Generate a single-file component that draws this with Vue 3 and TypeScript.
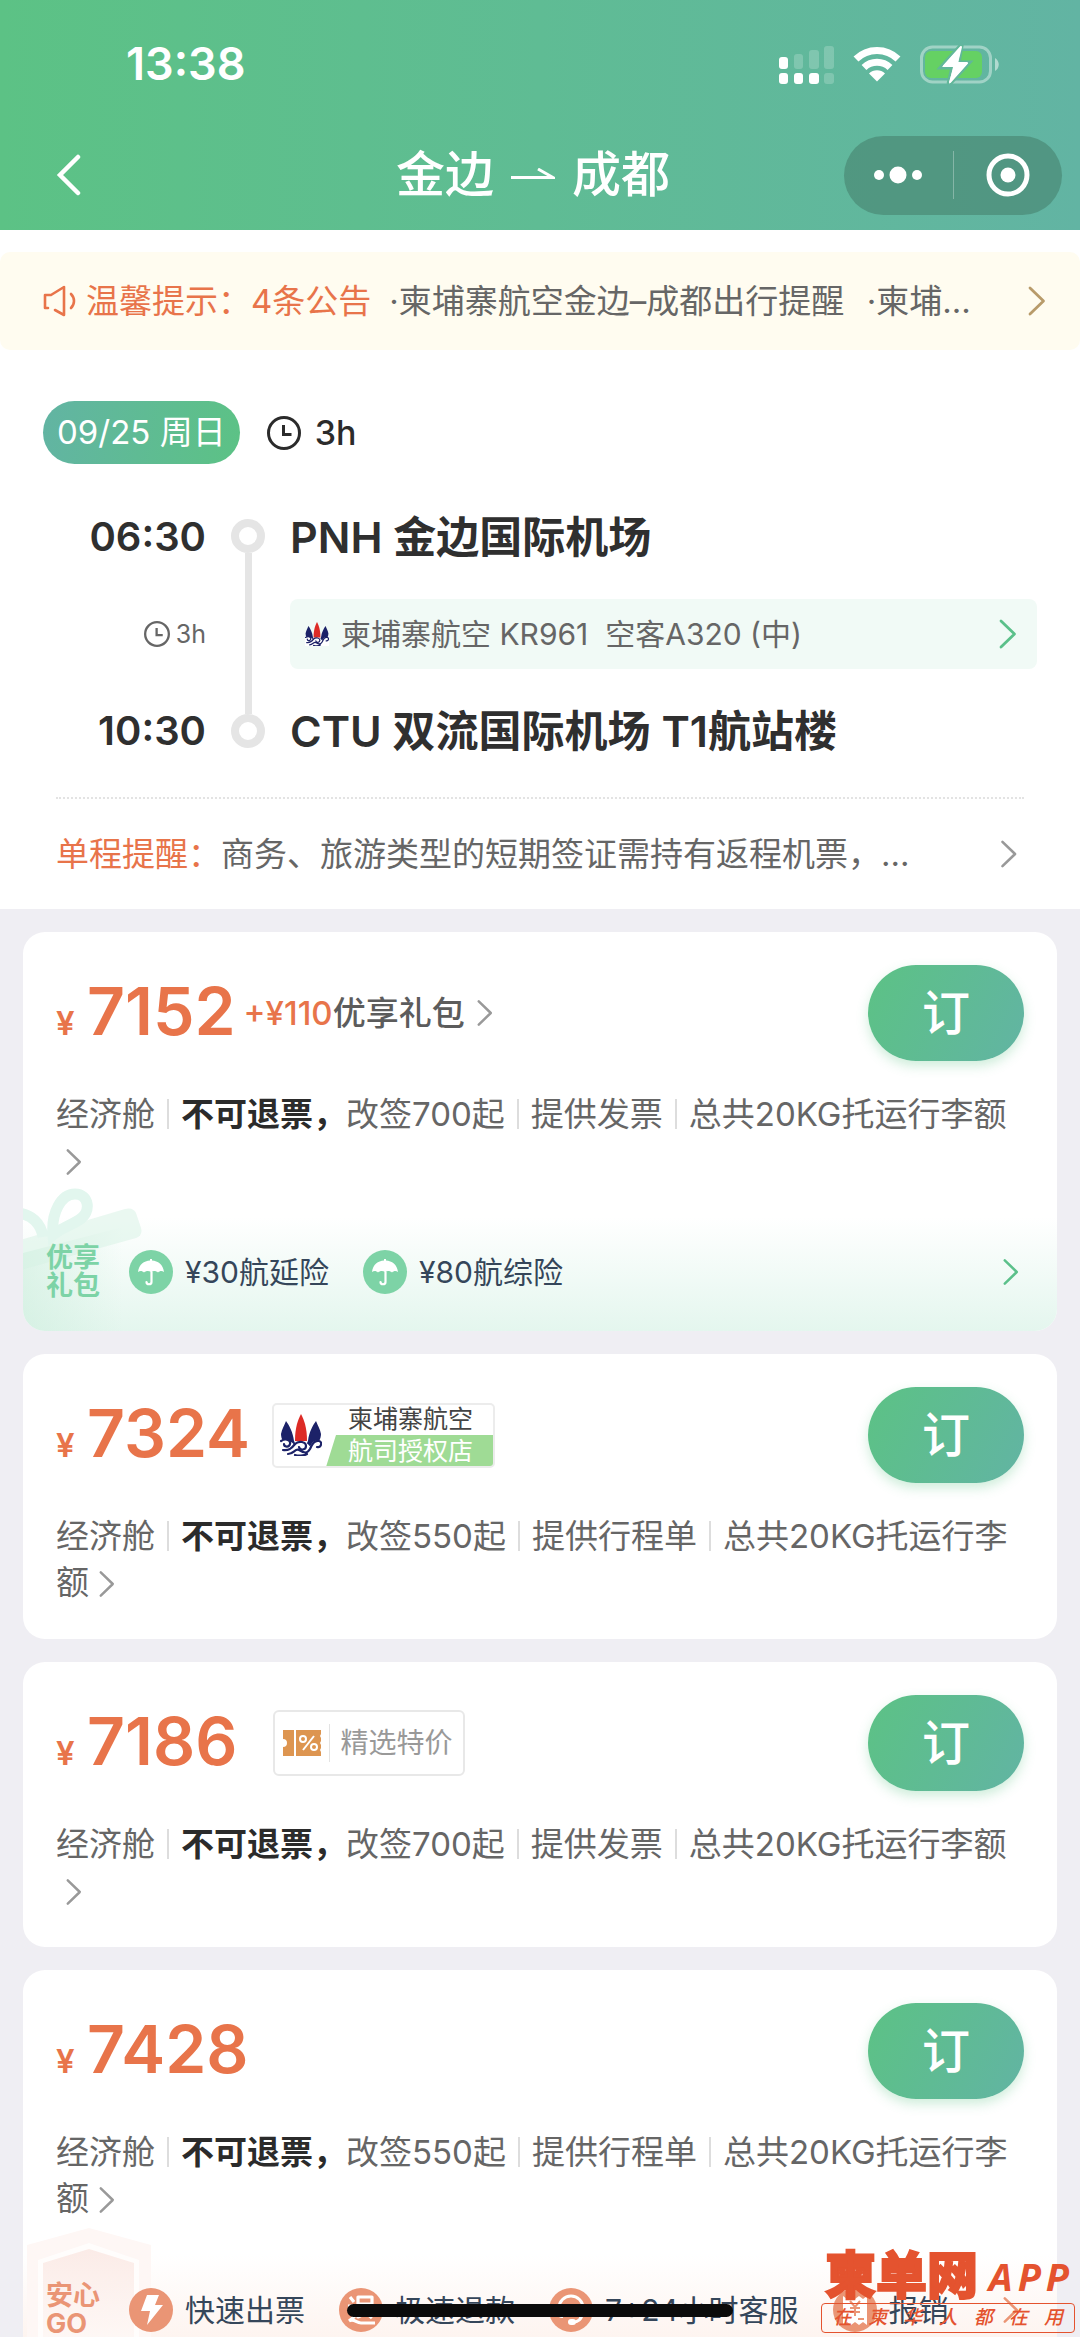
<script setup lang="ts">
interface Fare {
  price: number
  rebook: string
  invoice: string
  tag?: 'gift' | 'airline' | 'special'
  panel?: 'gift' | 'safe'
}

interface Perk {
  icon: string
  label: string
}

const fares: Fare[] = [
  { price: 7152, rebook: '改签700起', invoice: '提供发票', tag: 'gift', panel: 'gift' },
  { price: 7324, rebook: '改签550起', invoice: '提供行程单', tag: 'airline' },
  { price: 7186, rebook: '改签700起', invoice: '提供发票', tag: 'special' },
  { price: 7428, rebook: '改签550起', invoice: '提供行程单', panel: 'safe' },
]

const giftPerks: Perk[] = [
  { icon: 'umbrella', label: '¥30航延险' },
  { icon: 'umbrella', label: '¥80航综险' },
]

const safePerks: Perk[] = [
  { icon: 'bolt', label: '快速出票' },
  { icon: 'refund', label: '极速退款' },
  { icon: 'headset', label: '7*24小时客服' },
  { icon: 'receipt', label: '报销凭证' },
]

const brand: string[] = ['A', 'P', 'P']
const slogan: string[] = ['在', '柬', '华', '人', '都', '在', '用']
</script>

<template>
  <div class="app" lang="zh-CN">
    <svg class="defs" width="0" height="0" aria-hidden="true">
      <symbol id="airline" viewBox="0 0 42 42">
        <path d="M21 0C24 6 27 13 27 27H15C15 13 18 6 21 0Z" fill="#dd2b26" />
        <path d="M6 7C9 11 13 18 14 27L16 31 8 33C4 30 1 25 1 20 2 15 4 12 6 7Z" fill="#1c2268" />
        <path d="M36 7C33 11 29 18 28 27L26 31 34 33C38 30 41 25 41 20 40 15 38 12 36 7Z" fill="#1c2268" />
        <path d="M0 27c6-3 12 0 15 5 3-5 12-6 15 1 2-5 6-8 12-6v15H0Z" fill="#fff" />
        <path d="M1 27c5-3 10-1 9 3s-6 3-6 0M3 36c6 1 9-2 12-6 4-4 11-2 11 2s-6 5-7 1M8 40c6 0 7-6 11-4 5 3 8 4 11-1 2-5 5-9 9-8s2 7-2 6M15 41c3 1 9 1 12-1" fill="none" stroke="#1c2268" stroke-width="2.200" stroke-linecap="round" />
      </symbol>
      <symbol id="clock" viewBox="0 0 34 34">
        <circle cx="17" cy="17" r="15.500" fill="none" stroke="currentColor" stroke-width="3" />
        <path d="M16.500 9v9.500h8" fill="none" stroke="currentColor" stroke-width="3" />
      </symbol>
      <symbol id="chevron" viewBox="0 0 18 30">
        <path d="M2 2 15.500 15 2 28" fill="none" stroke="currentColor" stroke-width="2.800" stroke-linecap="round" stroke-linejoin="round" />
      </symbol>
      <symbol id="umbrella" viewBox="0 0 44 44">
        <path d="M9 22C10 14 15 11 21 10.500V9h2v1.500C29 11 34 14 35 22c-2-1.500-4-1.500-6 .500-2-2-5-2-7-.500-2-1.500-5-1.500-7 .500-2-2-4-2-6-.500Z" fill="#fff" />
        <path d="M22.500 22v10c0 3-5 3-5 0" fill="none" stroke="#fff" stroke-width="2.200" stroke-linecap="round" />
      </symbol>
      <symbol id="bolt" viewBox="0 0 44 44">
        <path d="M18 7h12l-4 10h8L18 37l3-14h-9Z" fill="#fff" />
      </symbol>
      <symbol id="refund" viewBox="0 0 44 44">
        <path d="M19 9h14v14H19ZM19 16h14M19 9v20l6-3M25 23l8 7M11 9l4 5M9 18h6v11l-5 4M10 33c5-3 7 2 12 2h14" fill="none" stroke="#fff" stroke-width="3.200" stroke-linejoin="round" />
      </symbol>
      <symbol id="headset" viewBox="0 0 44 44">
        <path d="M10 20a12 12 0 0 1 24 0M33 27c-1 5-4 7-9 7" fill="none" stroke="#fff" stroke-width="3" />
        <path d="M8 19h6v11c-4 0-6-2-6-5ZM36 19h-6v11c4 0 6-2 6-5Z" fill="#fff" />
        <rect x="19" y="31" width="8" height="6" rx="3" fill="#fff" />
      </symbol>
      <symbol id="receipt" viewBox="0 0 44 44">
        <path d="M10 8l4 3 4-3 4 3 4-3 4 3 4-3v29l-4-3-4 3-4-3-4 3-4-3-4 3Z" fill="#fff" />
        <path d="M17 13l5 6 5-6M22 19v9M17 20h10M17 24h10M25 31h6" fill="none" stroke="#ea9575" stroke-width="2" />
      </symbol>
    </svg>

    <header class="top">
      <div class="status">
        <span class="time">13:38</span>
        <div class="signals">
          <svg width="55" height="39" viewBox="0 0 55 39" fill="#fff">
            <rect x="0" y="12" width="9" height="12" rx="3" />
            <rect x="15" y="9" width="9" height="15" rx="3" opacity=".2" />
            <rect x="30" y="5" width="10" height="19" rx="3" opacity=".2" />
            <rect x="45" y="1" width="10" height="23" rx="3" opacity=".2" />
            <rect x="0" y="28" width="9" height="11" rx="3" />
            <rect x="15" y="28" width="9" height="11" rx="3" />
            <rect x="30" y="28" width="10" height="11" rx="3" />
            <rect x="45" y="28" width="10" height="11" rx="3" opacity=".2" />
          </svg>
          <svg width="48" height="36" viewBox="0 0 48 36">
            <path d="M3 13a30 30 0 0 1 42 0M11 21.500a19 19 0 0 1 26 0" fill="none" stroke="#fff" stroke-width="7" />
            <path d="M24 35.500 16 27.500a11.500 11.500 0 0 1 16 0Z" fill="#fff" />
          </svg>
          <svg width="80" height="39" viewBox="0 0 80 39">
            <rect x="1.500" y="2" width="69" height="35" rx="11" fill="none" stroke="#fff" stroke-opacity=".4" stroke-width="3" />
            <path d="M75 13c5 3 5 10 0 13Z" fill="#fff" opacity=".5" />
            <rect x="5" y="6" width="57" height="27" rx="6" fill="#65d163" />
            <path d="M41 1 22 22h11l-4 17 19-21H38Z" fill="#fff" stroke="#62b79a" stroke-width="5" paint-order="stroke" />
            <path d="M41 2 24 21h11l-5 16 17-19H37Z" fill="#fff" stroke="#fff" stroke-width="2" stroke-linejoin="round" />
          </svg>
        </div>
      </div>
      <nav class="nav">
        <button class="back" type="button" aria-label="返回">
          <svg width="26" height="42" viewBox="0 0 26 42">
            <path d="M22 3 4 21l18 18" fill="none" stroke="#fff" stroke-width="4.500" stroke-linecap="round" />
          </svg>
        </button>
        <h1 class="title">
          <span>金边</span>
          <svg width="44" height="14" viewBox="0 0 44 14">
            <path d="M0 9.500H42L27 1" fill="none" stroke="#fff" stroke-width="3" />
          </svg>
          <span>成都</span>
        </h1>
        <div class="capsule">
          <button type="button" aria-label="更多">
            <svg width="48" height="18" viewBox="0 0 48 18" fill="#fff">
              <circle cx="5" cy="9" r="5" />
              <circle cx="24" cy="9" r="8.500" />
              <circle cx="43" cy="9" r="5" />
            </svg>
          </button>
          <i></i>
          <button type="button" aria-label="关闭">
            <svg width="44" height="44" viewBox="0 0 44 44">
              <circle cx="22" cy="22" r="19" fill="none" stroke="#fff" stroke-width="5" />
              <circle cx="22" cy="22" r="7.500" fill="#fff" />
            </svg>
          </button>
        </div>
      </nav>
    </header>

    <main class="body">
      <section class="trip">
        <a class="notice" href="#notice">
          <svg class="horn" width="34" height="34" viewBox="0 0 34 34" fill="none" stroke="#e8744a" stroke-width="2.600" stroke-linejoin="round" stroke-linecap="round">
            <path d="M6 24H3V11h6L22 3v28l-9-5M29 10c4 4 4 10 0 14" />
          </svg>
          <strong>温馨提示：4条公告</strong>
          <span class="notice-text">·柬埔寨航空金边–成都出行提醒&ensp;&thinsp;·柬埔寨航空行李提醒</span>
          <svg class="chev" width="18" height="30"><use href="#chevron" /></svg>
        </a>

        <div class="date-row">
          <span class="date">09/25 周日</span>
          <svg width="34" height="34"><use href="#clock" /></svg>
          <span class="duration">3h</span>
        </div>

        <div class="route">
          <div class="times">
            <time>06:30</time>
            <span class="flight-time"><svg width="26" height="26"><use href="#clock" /></svg>3h</span>
            <time>10:30</time>
          </div>
          <div class="rail"><i></i><b></b><i></i></div>
          <div class="stops">
            <h2>PNH 金边国际机场</h2>
            <a class="flight" href="#flight">
              <svg width="24" height="24"><use href="#airline" /></svg>
              <span>柬埔寨航空 KR961&nbsp; 空客A320 (中)</span>
              <svg class="chev" width="18" height="32"><use href="#chevron" /></svg>
            </a>
            <h2>CTU 双流国际机场 T1航站楼</h2>
          </div>
        </div>

        <a class="reminder" href="#reminder">
          <strong>单程提醒：</strong>
          <span>商务、旅游类型的短期签证需持有返程机票，请提前确认</span>
          <svg class="chev" width="18" height="28"><use href="#chevron" /></svg>
        </a>
      </section>

      <section class="fares">
        <article v-for="fare in fares" :key="fare.price" class="fare">
          <div class="fare-main">
            <div class="fare-head">
              <p class="price"><small>¥</small><span>{{ fare.price }}</span></p>
              <a v-if="fare.tag === 'gift'" class="tag-gift" href="#gift">
                <em>+¥110</em>优享礼包
                <svg width="16" height="28"><use href="#chevron" /></svg>
              </a>
              <div v-else-if="fare.tag === 'airline'" class="tag-airline">
                <svg class="logo" width="42" height="42"><use href="#airline" /></svg>
                <div class="tag-lines">
                  <span>柬埔寨航空</span>
                  <span class="authorized">航司授权店</span>
                </div>
              </div>
              <div v-else-if="fare.tag === 'special'" class="tag-special">
                <svg width="38" height="26" viewBox="0 0 38 26">
                  <path d="M0 0H11V26H0V17a4 4 0 0 0 0-8ZM13 0H38V4l-1 2 1 2v3l-1 2 1 2v3l-1 2 1 2v4H13Z" fill="#dd9550" />
                  <path d="M20 20 31 6" stroke="#fff" stroke-width="2" />
                  <circle cx="20" cy="9" r="3" fill="none" stroke="#fff" stroke-width="2" />
                  <circle cx="31" cy="17" r="3" fill="none" stroke="#fff" stroke-width="2" />
                </svg>
                <span>精选特价</span>
              </div>
              <button class="book" type="button">订</button>
            </div>
            <p class="terms">经济舱<i></i><b>不可退票，</b>{{ fare.rebook }}<i></i>{{ fare.invoice }}<i></i>总共20KG托运行李额<span class="more"><svg width="16" height="28"><use href="#chevron" /></svg></span></p>
          </div>

          <div v-if="fare.panel === 'gift'" class="panel gift">
            <svg class="deco" width="126" height="144" viewBox="0 0 126 144">
              <defs>
                <linearGradient id="giftbox" x1="0" y1="0" x2="1" y2="0">
                  <stop offset="0" stop-color="#cdeedd" />
                  <stop offset="1" stop-color="#cdeedd" stop-opacity="0" />
                </linearGradient>
              </defs>
              <path d="M0 66 100 40V144H0Z" fill="url(#giftbox)" opacity=".6" />
              <path d="M-6 54 102 22q8-2 11 4l5 15q2 7-5 10L-6 84Z" fill="#d5f1e4" opacity=".5" />
              <path d="M30 48C28 26 38 7 52 7s17 18 4 26-17 7-26 15ZM20 50C18 36 8 27-6 26" fill="none" stroke="#e2f6ee" stroke-width="11" />
            </svg>
            <div class="badge"><span>优享</span><span>礼包</span></div>
            <ul class="perks">
              <li v-for="perk in giftPerks" :key="perk.label">
                <svg width="44" height="44"><use :href="'#' + perk.icon" /></svg>{{ perk.label }}
              </li>
            </ul>
            <svg class="chev" width="16" height="28"><use href="#chevron" /></svg>
          </div>

          <div v-else-if="fare.panel === 'safe'" class="panel safe">
            <svg class="deco" width="130" height="144" viewBox="0 0 130 144">
              <defs>
                <linearGradient id="shield" x1="0" y1="0" x2="0" y2="1">
                  <stop offset="0" stop-color="#fbebe7" />
                  <stop offset="1" stop-color="#fdf3ef" stop-opacity=".3" />
                </linearGradient>
              </defs>
              <path d="M4 20 66 3l62 17V144H4Z" fill="#fef7f5" />
              <path d="M15 35 66 18l50 17V144H15Z" fill="#fff" opacity=".7" />
              <path d="M20 38 66 24l45 14V144H20Z" fill="url(#shield)" />
            </svg>
            <div class="badge"><span>安心</span><span>GO</span></div>
            <ul class="perks">
              <li v-for="perk in safePerks" :key="perk.label">
                <svg width="44" height="44"><use :href="'#' + perk.icon" /></svg><span>{{ perk.label }}</span>
              </li>
            </ul>
            <svg class="chev" width="16" height="28"><use href="#chevron" /></svg>
          </div>
        </article>
      </section>
    </main>

    <div class="home-bar"></div>
    <aside class="mark">
      <div class="mark-name">
        <b>柬单网</b>
        <div class="mark-app"><span v-for="(char, index) in brand" :key="index">{{ char }}</span></div>
      </div>
      <div class="mark-slogan"><span v-for="(char, index) in slogan" :key="index">{{ char }}</span></div>
    </aside>
  </div>
</template>

<style>
body {
  margin: 0;
  background: #efeef3;
}
</style>

<style scoped>
.app {
  position: relative;
  height: 100vh;
  display: flex;
  flex-direction: column;
  overflow: hidden;
  background: #efeef3;
  color: #666;
  font-family: Inter, "Noto Sans CJK SC", sans-serif;
  font-size: 33px;
  line-height: 46px;
}
.app * { box-sizing: border-box; }
.defs { position: absolute; }
svg { display: block; flex: none; }
h1, h2, p, ul { margin: 0; padding: 0; }
a { color: inherit; text-decoration: none; }
button { border: 0; padding: 0; background: none; font: inherit; color: inherit; }

.top {
  flex: none;
  padding-bottom: 8px;
  background: linear-gradient(90deg, #5cc285, #5fbc94 50%, #62b4a3);
  color: #fff;
}
.status {
  display: flex;
  align-items: center;
  justify-content: space-between;
  height: 128px;
  padding: 0 80px 0 126px;
}
.time { font-size: 45px; font-weight: 600; }
.signals { display: flex; align-items: center; gap: 19px; }
.nav {
  display: grid;
  grid-template-columns: 1fr auto 1fr;
  align-items: center;
  height: 94px;
  padding: 0 18px 0 56px;
}
.back { justify-self: start; }
.title {
  display: flex;
  align-items: center;
  gap: 17px;
  margin-right: 52px;
  font-size: 49px;
  line-height: 70px;
  font-weight: 500;
}
.capsule {
  justify-self: end;
  display: flex;
  align-items: center;
  width: 218px;
  height: 79px;
  border-radius: 40px;
  background: rgba(70, 130, 110, .6);
}
.capsule button { flex: 1; display: flex; justify-content: center; }
.capsule i { width: 1px; height: 48px; background: rgba(255, 255, 255, .3); }

.body { flex: 1; min-height: 0; overflow: hidden; }
.trip { padding-top: 22px; background: #fff; }
.notice {
  display: flex;
  align-items: center;
  height: 98px;
  padding: 0 34px 0 42px;
  border-radius: 10px;
  background: #fffcf0;
}
.notice strong { margin: 0 18px 0 10px; font-weight: 400; color: #e8744a; white-space: nowrap; }
.notice-text {
  flex: 1;
  min-width: 0;
  margin-right: 44px;
  overflow: hidden;
  text-overflow: ellipsis;
  white-space: nowrap;
}
.notice .chev { color: #b89b6a; }

.date-row {
  display: flex;
  align-items: center;
  margin-top: 51px;
  padding: 0 43px;
  color: #2b2b2b;
}
.date {
  padding: 0 14px;
  margin-right: 27px;
  border-radius: 32px;
  background: linear-gradient(100deg, #62b4a3, #5cc285);
  color: #fff;
  font-size: 33px;
  line-height: 63px;
}
.duration { margin-left: 14px; font-size: 34px; font-weight: 500; }

.route {
  display: flex;
  margin: 43px 43px 0;
  color: #2f2f2f;
}
.times {
  display: flex;
  flex-direction: column;
  justify-content: space-between;
  align-items: flex-end;
  width: 163px;
  font-size: 40px;
  font-weight: 600;
  line-height: 60px;
}
.flight-time {
  display: flex;
  align-items: center;
  gap: 6px;
  font-size: 25px;
  font-weight: 400;
  color: #666;
}
.rail {
  display: flex;
  flex-direction: column;
  align-items: center;
  margin: 12px 25px 13px;
}
.rail i { width: 34px; height: 34px; border: 8px solid #e5e5e5; border-radius: 50%; }
.rail b { flex: 1; width: 7px; background: #e5e5e5; }
.stops { flex: 1; min-width: 0; }
.stops h2 { font-size: 43px; line-height: 60px; font-weight: 600; white-space: nowrap; }
.flight {
  display: flex;
  align-items: center;
  gap: 12px;
  height: 70px;
  margin: 32px 0;
  padding: 0 20px 0 15px;
  border-radius: 8px;
  background: #f1faf6;
  font-size: 30px;
  color: #666;
}
.flight span { flex: 1; white-space: nowrap; }
.flight .chev { color: #5bc08a; }

.reminder {
  display: flex;
  align-items: center;
  height: 112px;
  margin: 36px 56px 0;
  border-top: 2px dotted #e3e3e3;
}
.reminder strong { font-weight: 400; color: #e8744a; }
.reminder span {
  flex: 1;
  min-width: 0;
  margin-right: 78px;
  overflow: hidden;
  text-overflow: ellipsis;
  white-space: nowrap;
}
.reminder .chev { margin-right: 6px; color: #999; }

.fares {
  display: flex;
  flex-direction: column;
  gap: 23px;
  padding: 23px;
}
.fare { overflow: hidden; border-radius: 22px; background: #fff; }
.fare-main { height: 285px; padding: 33px 33px 0; }
.fare-head { display: flex; align-items: center; height: 96px; }
.price {
  display: flex;
  align-items: baseline;
  padding-bottom: 4px;
  color: #e8744a;
  font-weight: 600;
}
.price small { width: 31px; font-size: 33px; line-height: 40px; }
.price span { font-size: 66px; line-height: 80px; }
.tag-gift {
  display: flex;
  align-items: center;
  margin-left: 8px;
  font-weight: 500;
  color: #5c5c5c;
  white-space: nowrap;
}
.tag-gift em { font-style: normal; color: #e8744a; }
.tag-gift svg { margin-left: 12px; color: #999; }
.tag-airline {
  display: flex;
  align-items: center;
  height: 65px;
  margin-left: 22px;
  padding-left: 6px;
  border: 2px solid #ececec;
  border-radius: 5px;
  overflow: hidden;
}
.tag-lines { display: flex; flex-direction: column; margin-left: 4px; font-size: 25px; line-height: 32px; color: #444; }
.tag-lines span { padding: 0 20px 0 22px; }
.tag-lines .authorized {
  background: #9fdb95;
  color: #fff;
  clip-path: polygon(10px 0, 100% 0, 100% 100%, 0 100%);
}
.tag-special {
  display: flex;
  align-items: center;
  height: 66px;
  margin-left: 36px;
  padding: 0 11px 0 8px;
  border: 2px solid #e8e8e8;
  border-radius: 6px;
  font-size: 28px;
  color: #999;
}
.tag-special span { margin-left: 8px; padding-left: 10px; border-left: 1px solid #e3e3e3; line-height: 38px; }
.book {
  width: 156px;
  height: 96px;
  margin-left: auto;
  border-radius: 48px;
  background: linear-gradient(115deg, #5cc285, #62b4a3);
  box-shadow: 0 5px 12px rgba(92, 194, 133, .3);
  color: #fff;
  font-size: 48px;
  font-weight: 500;
}
.terms { margin-top: 30px; line-height: 46px; }
.terms b { font-weight: 700; color: #2b2b2b; }
.terms i {
  display: inline-block;
  width: 2px;
  height: 30px;
  margin: 0 12px;
  vertical-align: -3px;
  background: #ddd;
}
.more {
  display: inline-block;
  padding-left: 10px;
  width: 32px;
  color: #999;
  vertical-align: -4px;
  line-height: 28px;
}

.panel {
  position: relative;
  display: flex;
  align-items: center;
  height: 114px;
  padding: 0 38px 4px 23px;
}
.panel.gift { background: linear-gradient(#fff, #e4f6ee); }
.panel.safe { background: linear-gradient(#fff, #fdf0ea); }
.panel > * { position: relative; }
.panel .deco { position: absolute; left: 0; bottom: 0; }
.badge {
  display: flex;
  flex-direction: column;
  width: 54px;
  font-size: 27px;
  line-height: 28px;
  font-weight: 700;
  color: #7dd3a6;
}
.safe .badge { color: #ea9575; }
.perks {
  display: flex;
  flex: 1;
  min-width: 0;
  gap: 34px;
  margin: 0 54px 0 29px;
  overflow: hidden;
  list-style: none;
  font-size: 30px;
  color: #35465a;
  white-space: nowrap;
}
.perks li { display: flex; align-items: center; gap: 12px; }
.perks svg { border-radius: 50%; background: #7dd3a6; }
.safe .perks svg { background: #ea9575; }
.gift .chev { color: #5bc08a; }
.safe .chev { color: #ea9575; }

.home-bar {
  position: absolute;
  left: 50%;
  bottom: 20px;
  width: 386px;
  height: 13px;
  margin-left: -193px;
  border-radius: 7px;
  background: #0b0b0b;
}
.mark {
  position: absolute;
  right: 5px;
  bottom: 4px;
  width: 254px;
  color: #e4532f;
}
.mark-name { display: flex; align-items: center; justify-content: space-between; height: 54px; padding: 0 6px 0 4px; }
.mark-name b { font-size: 51px; line-height: 54px; font-weight: 900; -webkit-text-stroke: 2px #e4532f; }
.mark-app {
  display: flex;
  gap: 5px;
  font-family: "Noto Sans", sans-serif;
  font-size: 38px;
  font-style: italic;
  font-weight: 700;
}
.mark-slogan {
  display: flex;
  justify-content: space-between;
  height: 30px;
  padding: 0 11px;
  border: 1px solid #e4532f;
  border-radius: 4px;
  font-size: 19px;
  line-height: 28px;
  font-style: italic;
  font-weight: 500;
}
</style>
